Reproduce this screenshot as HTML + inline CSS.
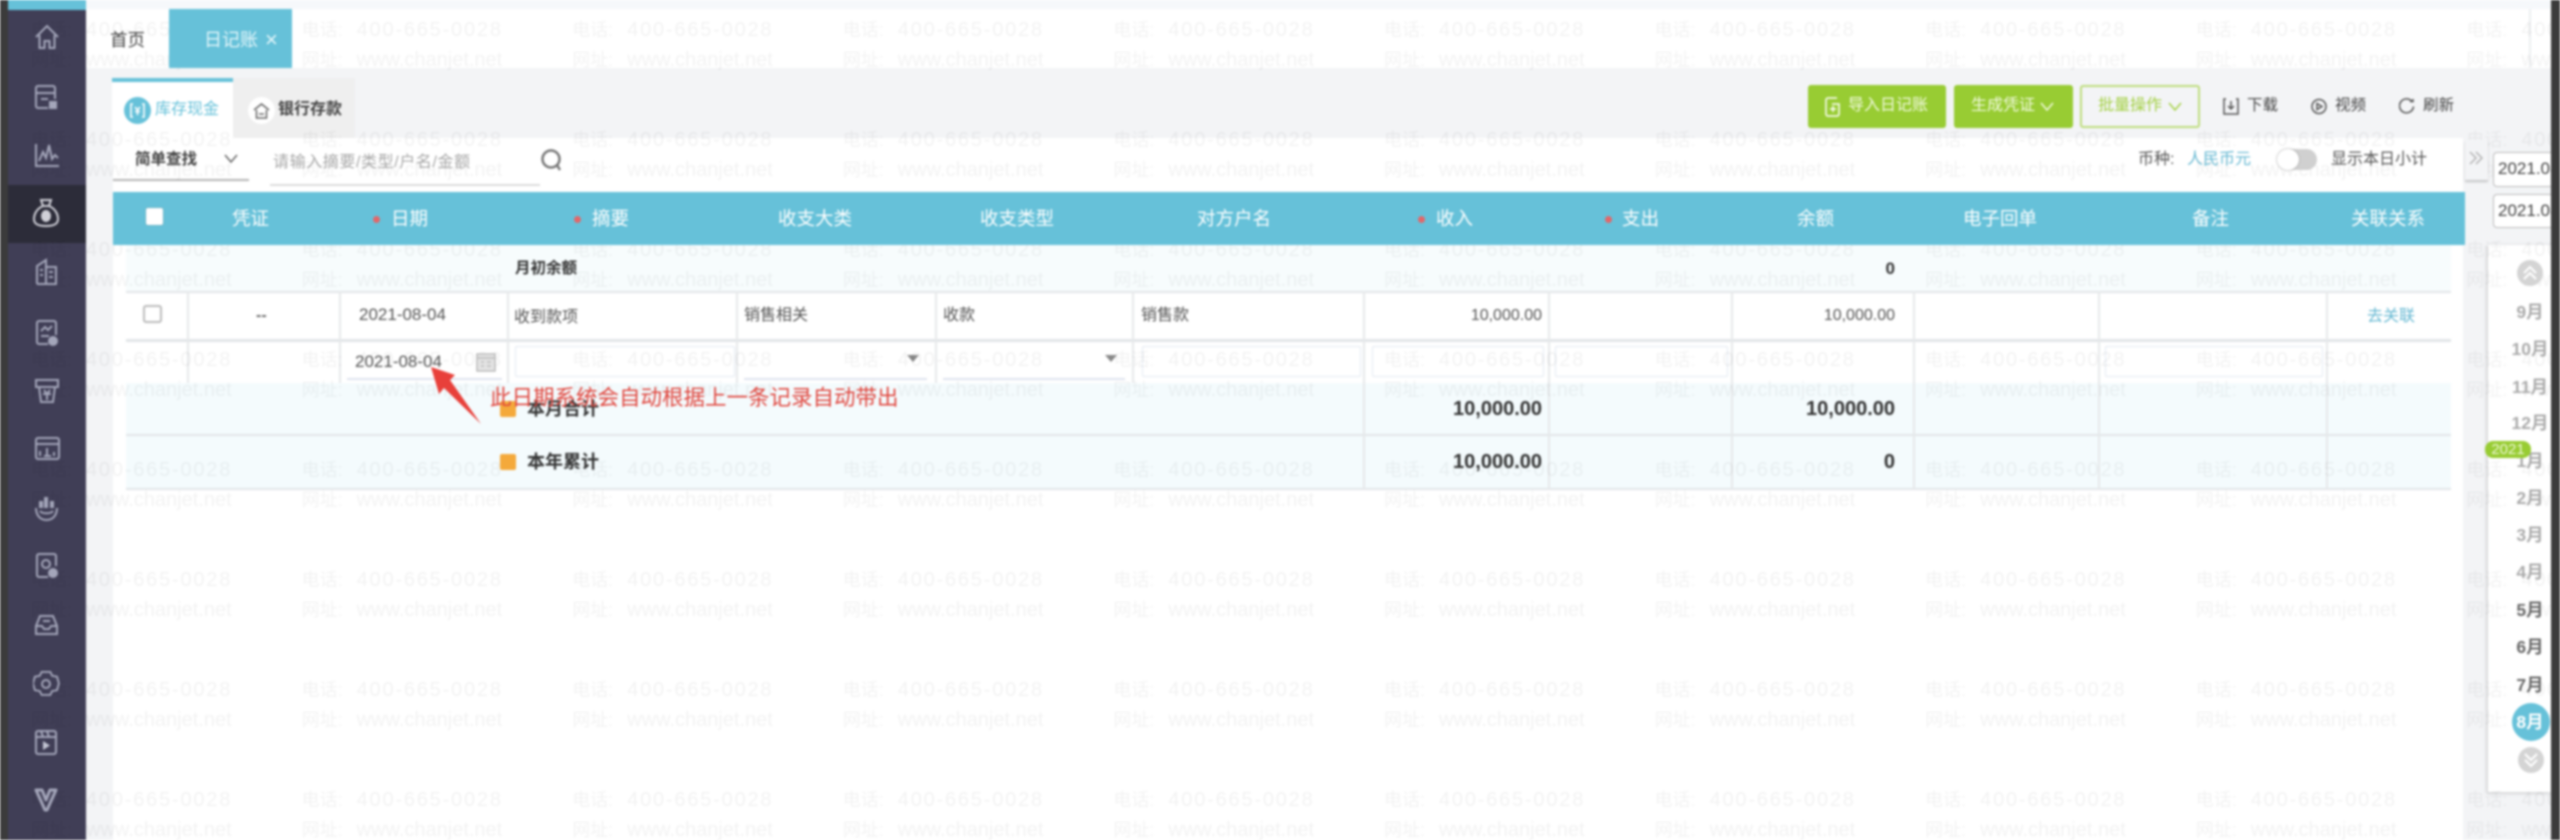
<!DOCTYPE html>
<html lang="zh"><head><meta charset="utf-8"><title>日记账</title>
<style>
*{box-sizing:border-box}
html,body{margin:0;padding:0}
body{width:2560px;height:840px;overflow:hidden;background:#fff;position:relative;font-family:"Liberation Sans","Noto Sans CJK SC",sans-serif;color:#444}
#pg{position:absolute;left:0;top:0;width:2560px;height:840px;overflow:hidden;filter:blur(.95px)}
.a{position:absolute}
.t{position:absolute;line-height:24px;white-space:nowrap;font-size:16px}
.h{color:#fff;font-size:18.5px;z-index:3}
.dot{position:absolute;width:7px;height:7px;border-radius:50%;background:#e2676a;z-index:3;top:216px}
.b{font-weight:700;color:#333}
.vl{position:absolute;width:2px;background:#e6e8ea}
.hl{position:absolute;left:126px;width:2325px;height:2px;background:#e2e5e8}
.in{position:absolute;top:346px;height:31px;border:1.5px solid #e3e9f2;border-radius:2px}
.ul{position:absolute;height:2px;top:378px;background:#dfe3ee}
.tri{position:absolute;top:355px;width:0;height:0;border-left:6px solid transparent;border-right:6px solid transparent;border-top:7px solid #888}
.mo{position:absolute;left:2500px;width:60px;text-align:center;font-size:17.5px;line-height:24px;color:#aaa;font-weight:700;z-index:3}
.w{position:absolute;left:31px;white-space:nowrap;height:26px;line-height:26px;z-index:2;color:rgba(0,0,0,.05);font-size:20px}
.w i{display:inline-block;width:270.6px;font-style:normal;letter-spacing:1.8px}
.w u{display:inline-block;width:55px;text-decoration:none;font-size:18px;letter-spacing:0}
.w.n i{letter-spacing:0}
svg{position:absolute;z-index:3;fill:none}
.ic{stroke:#a4a6ba;stroke-width:2}
</style></head><body><div id="pg">

<!-- backgrounds -->
<div class="a" style="left:0;top:0;width:2560px;height:9px;background:#f6f8fb"></div>
<div class="a" style="left:86px;top:68px;width:27px;height:772px;background:#f3f4f6"></div>
<div class="a" style="left:86px;top:68px;width:2465px;height:70px;background:#f3f4f6"></div>
<div class="a" style="left:2463px;top:138px;width:25px;height:702px;background:#f3f4f6"></div>
<div class="a" style="left:2488px;top:138px;width:63px;height:702px;background:#f3f4f6"></div>
<div class="a" style="left:2488px;top:245px;width:63px;height:547px;background:#fff;box-shadow:-1px 1px 4px rgba(0,0,0,.18);"></div>
<div class="a" style="left:2529px;top:9px;width:2px;height:59px;background:#eceef0"></div>

<!-- sidebar -->
<div class="a" style="left:0;top:0;width:8px;height:840px;background:#3b3b3b"></div>
<div class="a" style="left:8px;top:0;width:78px;height:840px;background:#403e56"></div>
<div class="a" style="left:8px;top:0;width:78px;height:10px;background:#66c1d9"></div>
<div class="a" style="left:8px;top:185px;width:78px;height:58px;background:#2c2c39"></div>
<div class="a" style="left:2551px;top:0;width:9px;height:840px;background:#3b3b3b;z-index:5"></div>

<svg class="ic" style="left:34px;top:24px" width="26" height="26" viewBox="0 0 26 26"><path d="M2 13 13 2l11 11M5.500 11v13h5v-7h5v7h5V11"/></svg>
<svg class="ic" style="left:34px;top:84px" width="24" height="26" viewBox="0 0 24 26"><path d="M14 24H4a2 2 0 0 1-2-2V4a2 2 0 0 1 2-2h15a2 2 0 0 1 2 2v11M2 9h19M7 15h7"/><rect x="16" y="18" width="6" height="6" fill="#a4a6ba"/></svg>
<svg class="ic" style="left:34px;top:142px" width="26" height="26" viewBox="0 0 26 26"><path d="M2 2v22h23M5 19l4-9 3 6 3-13 3 14 3-4 3 3"/></svg>
<svg style="left:33px;top:198px;stroke:#d0d0d8;stroke-width:2" width="26" height="30" viewBox="0 0 26 30"><path d="M8 2h10l-2 6h-6zM10 8C3 11 1 17 1 21c0 5 4 7 12 7s12-2 12-7c0-4-2-10-9-13z"/><ellipse cx="13" cy="18" rx="4" ry="5" fill="#d0d0d8"/></svg>
<svg class="ic" style="left:35px;top:258px" width="24" height="28" viewBox="0 0 24 28"><path d="M2 26V8l9-6v24M11 9h10v17H2M5 12h3M5 17h3M14 14h4M14 19h4"/></svg>
<svg class="ic" style="left:35px;top:320px" width="23" height="26" viewBox="0 0 23 26"><path d="M13 24H4a2 2 0 0 1-2-2V3a2 2 0 0 1 2-2h15a2 2 0 0 1 2 2v12M6 11l4-4 3 3 4-4M6 16h8"/><circle cx="18" cy="21" r="4" fill="#a4a6ba"/></svg>
<svg class="ic" style="left:34px;top:378px" width="26" height="26" viewBox="0 0 26 26"><path d="M2 2h22v7H2zM5 9l2 15h12l2-15M10 12l3 4 3-4M9 16h8M13 16v6"/></svg>
<svg class="ic" style="left:34px;top:436px" width="27" height="25" viewBox="0 0 27 25"><rect x="2" y="2" width="23" height="21" rx="2"/><path d="M2 8h23M6 20v-5M13 20v-8M20 20v-4M10 20h7"/></svg>
<svg class="ic" style="left:34px;top:494px" width="25" height="28" viewBox="0 0 25 28"><path d="M2 14c0 7 4 12 10.500 12S23 21 23 14M6 17c2 3 11 3 13 0"/><path d="M7 14V7M12 14V3M18 14V7" stroke-width="4"/></svg>
<svg class="ic" style="left:35px;top:552px" width="23" height="27" viewBox="0 0 23 27"><path d="M13 25H4a2 2 0 0 1-2-2V4a2 2 0 0 1 2-2h15a2 2 0 0 1 2 2v10"/><circle cx="11" cy="12" r="4"/><circle cx="18" cy="21" r="4" fill="#a4a6ba"/></svg>
<svg class="ic" style="left:34px;top:613px" width="25" height="24" viewBox="0 0 25 24"><path d="M2 13 6 3h13l4 10v8H2zM2 13h6l2 3h5l2-3h6M9 8h7"/></svg>
<svg class="ic" style="left:33px;top:670px" width="27" height="28" viewBox="0 0 27 28"><path d="M9 2h9l2 4 5 1 2 7-2 7-5 1-2 4H9l-2-4-5-1-2-7 2-7 5-1z" transform="scale(.96)"/><circle cx="13" cy="14" r="4"/></svg>
<svg class="ic" style="left:34px;top:729px" width="24" height="27" viewBox="0 0 24 27"><rect x="2" y="2" width="20" height="23" rx="2"/><path d="M2 8h20M7 2l2 6M13 2l2 6"/><path d="M9 12l7 4.500-7 4.500z" fill="#c4c6d4" stroke="none"/></svg>
<svg style="left:34px;top:788px;stroke:#a4a6ba;stroke-width:3" width="24" height="24" viewBox="0 0 24 24"><path d="M2 2h6l4 10 4-10h6L13 22h-2z" stroke-linejoin="round"/></svg>

<!-- tabs -->
<div class="t" style="left:110px;top:28px;font-size:17.500px;color:#444">首页</div>
<div class="a" style="left:169px;top:9px;width:123px;height:59px;background:#66c1d9;z-index:3"></div>
<div class="t" style="left:204px;top:28px;font-size:18px;color:#e4f6fa;z-index:3">日记账</div>
<div class="t" style="left:265px;top:28px;font-size:22px;color:#e4f6fa;z-index:3">×</div>

<div class="a" style="left:112px;top:78px;width:121px;height:60px;background:#fff;border-top:4px solid #66c1d9"></div>
<div class="a" style="left:233px;top:78px;width:122px;height:60px;background:#efefef"></div>
<div class="a" style="left:124px;top:97px;width:27px;height:27px;border-radius:50%;background:#66c1d9"></div>
<svg style="left:130px;top:103px;stroke:#fff;stroke-width:1.600" width="15" height="15" viewBox="0 0 15 15"><path d="M3 1H1v13h2M12 1h2v13h-2M5 4l2.500 3L10 4M7.500 7v5M5 8.500h5"/></svg>
<div class="t" style="left:155px;top:98px;color:#66c1d9">库存现金</div>
<div class="a" style="left:248px;top:97px;width:27px;height:27px;border-radius:50%;background:#fff"></div>
<svg style="left:253px;top:103px;stroke:#666;stroke-width:1.500" width="17" height="16" viewBox="0 0 17 16"><path d="M1 7l7.500-6L16 7M3.500 7v8h10V7M6 11h5"/></svg>
<div class="t" style="left:278px;top:98px;color:#444;font-weight:700">银行存款</div>

<!-- search row -->
<div class="t" style="left:135px;top:148px;color:#444;font-weight:700;font-size:15.500px">简单查找</div>
<svg style="left:224px;top:154px;stroke:#666;stroke-width:1.500" width="14" height="9" viewBox="0 0 14 9"><path d="M1 1l6 7 6-7"/></svg>
<div class="a" style="left:113px;top:179px;width:136px;height:2px;background:#b4b4b4"></div>
<div class="t" style="left:273px;top:151px;color:#a8a8a8;letter-spacing:.6px">请输入摘要/类型/户名/金额</div>
<div class="a" style="left:270px;top:184px;width:270px;height:1.500px;background:#dcdcdc"></div>
<svg style="left:540px;top:149px;stroke:#777;stroke-width:2.500" width="24" height="24" viewBox="0 0 24 24"><circle cx="11" cy="10" r="8.500"/><path d="M17 16l3 5"/></svg>

<!-- toolbar right -->
<div class="a" style="left:1808px;top:85px;width:138px;height:43px;background:#98cc33;border-radius:3px;z-index:3"></div>
<svg style="left:1825px;top:97px;stroke:#fff;stroke-width:1.500" width="16" height="20" viewBox="0 0 16 20"><path d="M12 1H3a2 2 0 0 0-2 2v14a2 2 0 0 0 2 2h9a2 2 0 0 0 2-2V7H7M8 9v6M5 12h6"/></svg>
<div class="t" style="left:1848px;top:94px;color:#f2fae0;z-index:3">导入日记账</div>
<div class="a" style="left:1954px;top:85px;width:119px;height:43px;background:#98cc33;border-radius:3px;z-index:3"></div>
<div class="t" style="left:1971px;top:94px;color:#f2fae0;z-index:3">生成凭证</div>
<svg style="left:2040px;top:102px;stroke:#f2fae0;stroke-width:1.500" width="14" height="9" viewBox="0 0 14 9"><path d="M1 1l6 7 6-7"/></svg>
<div class="a" style="left:2080px;top:85px;width:120px;height:43px;border:2px solid #bedd7d;border-radius:3px;z-index:3"></div>
<div class="t" style="left:2098px;top:94px;color:#a5d147;z-index:3">批量操作</div>
<svg style="left:2168px;top:102px;stroke:#a5d147;stroke-width:1.500" width="14" height="9" viewBox="0 0 14 9"><path d="M1 1l6 7 6-7"/></svg>

<svg style="left:2223px;top:98px;stroke:#555;stroke-width:1.500" width="16" height="17" viewBox="0 0 16 17"><path d="M3 1H1v15h14V1h-2M8 3v8M5 8l3 3 3-3"/></svg>
<div class="t" style="left:2247px;top:94px;font-size:15.500px;color:#444">下载</div>
<svg style="left:2311px;top:98px;stroke:#555;stroke-width:1.500" width="16" height="17" viewBox="0 0 16 17"><circle cx="8" cy="8.500" r="7"/><path d="M6 5.500l5 3-5 3z"/></svg>
<div class="t" style="left:2335px;top:94px;font-size:15.500px;color:#444">视频</div>
<svg style="left:2399px;top:98px;stroke:#555;stroke-width:1.500" width="16" height="17" viewBox="0 0 16 17"><path d="M13 3.500a7 7 0 1 0 1.500 5"/><path d="M11 3.500h3V1"/></svg>
<div class="t" style="left:2423px;top:94px;font-size:15.500px;color:#444">刷新</div>

<div class="t" style="left:2138px;top:148px;color:#555">币种:</div>
<div class="t" style="left:2187px;top:148px;color:#66b8d2">人民币元</div>
<div class="a" style="left:2277px;top:149px;width:40px;height:21px;border-radius:11px;background:#d0d0d0;z-index:3"></div>
<div class="a" style="left:2277px;top:149px;width:22px;height:21px;border-radius:50%;background:#fff;box-shadow:0 0 2px #999;z-index:3"></div>
<div class="t" style="left:2331px;top:148px;color:#555">显示本日小计</div>

<!-- table header -->
<div class="a" style="left:113px;top:192px;width:2352px;height:53px;background:#66c1d9;z-index:3"></div>
<div class="a" style="left:146px;top:208px;width:17px;height:17px;background:#fff;border-radius:2px;box-shadow:0 0 1px #666;z-index:3"></div>
<div class="t h" style="left:232px;top:207px">凭证</div>
<div class="dot" style="left:373px"></div><div class="t h" style="left:391px;top:207px">日期</div>
<div class="dot" style="left:574px"></div><div class="t h" style="left:592px;top:207px">摘要</div>
<div class="t h" style="left:778px;top:207px">收支大类</div>
<div class="t h" style="left:980px;top:207px">收支类型</div>
<div class="t h" style="left:1197px;top:207px">对方户名</div>
<div class="dot" style="left:1418px"></div><div class="t h" style="left:1436px;top:207px">收入</div>
<div class="dot" style="left:1605px"></div><div class="t h" style="left:1622px;top:207px">支出</div>
<div class="t h" style="left:1797px;top:207px">余额</div>
<div class="t h" style="left:1963px;top:207px">电子回单</div>
<div class="t h" style="left:2192px;top:207px">备注</div>
<div class="t h" style="left:2351px;top:207px">关联关系</div>

<!-- rows -->
<div class="a" style="left:126px;top:245px;width:2325px;height:46px;background:#f7fcfd"></div>
<div class="a" style="left:126px;top:383px;width:2325px;height:106px;background:#f4fbfd"></div>
<div class="hl" style="top:291px"></div>
<div class="hl" style="top:339px;height:3px"></div>
<div class="hl" style="top:434px"></div>
<div class="hl" style="top:488px"></div>
<div class="vl" style="left:187px;top:291px;height:92px"></div>
<div class="vl" style="left:339px;top:291px;height:92px"></div>
<div class="vl" style="left:507px;top:291px;height:92px"></div>
<div class="vl" style="left:736px;top:291px;height:92px"></div>
<div class="vl" style="left:935px;top:291px;height:92px"></div>
<div class="vl" style="left:1132px;top:291px;height:92px"></div>
<div class="vl" style="left:1363px;top:291px;height:198px"></div>
<div class="vl" style="left:1548px;top:291px;height:198px"></div>
<div class="vl" style="left:1731px;top:291px;height:198px"></div>
<div class="vl" style="left:1913px;top:291px;height:198px"></div>
<div class="vl" style="left:2098px;top:291px;height:198px"></div>
<div class="vl" style="left:2326px;top:291px;height:198px"></div>

<div class="t b" style="left:515px;top:257px;font-size:15.500px">月初余额</div>
<div class="t b" style="right:665px;top:257px;font-size:17px">0</div>

<div class="a" style="left:143px;top:305px;width:19px;height:18px;border:2px solid #bbb;border-radius:3px;background:#fff"></div>
<div class="t" style="left:256px;top:304px;font-weight:700;color:#666">--</div>
<div class="t" style="left:359px;top:303px;font-size:17px;color:#555">2021-08-04</div>
<div class="t" style="left:514px;top:306px;color:#555">收到款项</div>
<div class="t" style="left:744px;top:304px;color:#555">销售相关</div>
<div class="t" style="left:943px;top:304px;color:#555">收款</div>
<div class="t" style="left:1141px;top:304px;color:#555">销售款</div>
<div class="t" style="right:1018px;top:304px;color:#555">10,000.00</div>
<div class="t" style="right:665px;top:304px;color:#555">10,000.00</div>
<div class="t" style="left:2367px;top:305px;color:#66b8d2">去关联</div>

<div class="t" style="left:355px;top:350px;font-size:17px;color:#555">2021-08-04</div>
<div class="ul" style="left:347px;width:155px"></div>
<svg style="left:476px;top:352px;stroke:#bbb;stroke-width:1.500" width="20" height="20" viewBox="0 0 20 20"><rect x="1" y="2" width="18" height="17" fill="#e4e4e4"/><path d="M1 6h18M5 10h3M11 10h4M5 14h3M11 14h4"/></svg>
<div class="in" style="left:515px;width:220px"></div>
<div class="ul" style="left:744px;width:183px"></div><div class="tri" style="left:907px"></div>
<div class="ul" style="left:943px;width:182px"></div><div class="tri" style="left:1105px"></div>
<div class="in" style="left:1142px;width:219px"></div>
<div class="in" style="left:1372px;width:172px"></div>
<div class="in" style="left:1555px;width:173px"></div>
<div class="in" style="left:2105px;width:218px"></div>

<div class="a" style="left:500px;top:401px;width:16px;height:16px;background:#f4a93b;border-radius:2px"></div>
<div class="t b" style="left:527px;top:397px;font-size:18px">本月合计</div>
<div class="a" style="left:500px;top:454px;width:16px;height:16px;background:#f4a93b;border-radius:2px"></div>
<div class="t b" style="left:527px;top:450px;font-size:18px">本年累计</div>
<div class="t b" style="right:1018px;top:397px;font-size:20px">10,000.00</div>
<div class="t b" style="right:665px;top:397px;font-size:20px">10,000.00</div>
<div class="t b" style="right:1018px;top:450px;font-size:20px">10,000.00</div>
<div class="t b" style="right:665px;top:450px;font-size:20px">0</div>

<!-- annotation -->
<div class="t" style="left:490px;top:386px;font-size:21.500px;color:#e0463e;z-index:4">此日期系统会自动根据上一条记录自动带出</div>
<svg style="left:425px;top:362px;z-index:4" width="65" height="70" viewBox="0 0 65 70"><path d="M6 5 30 13 25 18 56 62 19 26 14 32z" fill="#e8403a"/></svg>

<!-- right panel -->
<div class="a" style="left:2465px;top:140px;width:23px;height:40px;background:#f3f4f6;box-shadow:0 2px 2px rgba(0,0,0,.2);z-index:3"></div>
<svg style="left:2468px;top:150px;stroke:#b4b4b4;stroke-width:1.500" width="16" height="16" viewBox="0 0 16 16"><path d="M2 2l6 6-6 6M8 2l6 6-6 6"/></svg>
<div class="a" style="left:2493px;top:152px;width:58px;height:35px;background:#fff;border:1.500px solid #bbb;border-right:0;border-radius:4px 0 0 4px;z-index:3;overflow:hidden;font-size:17px;line-height:32px;padding-left:4px;color:#444;white-space:nowrap">2021.08</div>
<div class="a" style="left:2493px;top:194px;width:58px;height:34px;background:#fff;border:1.500px solid #bbb;border-right:0;border-radius:4px 0 0 4px;z-index:3;overflow:hidden;font-size:17px;line-height:31px;padding-left:4px;color:#444;white-space:nowrap">2021.08</div>

<div class="a" style="left:2517px;top:260px;width:26px;height:26px;border-radius:50%;background:#d4d4d4;z-index:3"></div>
<svg style="left:2522px;top:265px;stroke:#fff;stroke-width:2" width="16" height="16" viewBox="0 0 16 16"><path d="M2 8l6-6 6 6M2 14l6-6 6 6"/></svg>
<div class="mo" style="top:300px">9月</div>
<div class="mo" style="top:337px">10月</div>
<div class="mo" style="top:375px">11月</div>
<div class="mo" style="top:411px">12月</div>
<div class="mo" style="top:449px">1月</div>
<div class="a" style="left:2485px;top:441px;width:46px;height:17px;border-radius:8px;background:#98cc33;z-index:4;color:#eef8d8;font-size:15px;line-height:17px;text-align:center">2021</div>
<div class="mo" style="top:486px">2月</div>
<div class="mo" style="top:523px">3月</div>
<div class="mo" style="top:560px">4月</div>
<div class="mo" style="top:598px;color:#666">5月</div>
<div class="mo" style="top:635px;color:#666">6月</div>
<div class="mo" style="top:673px;color:#666">7月</div>
<div class="a" style="left:2512px;top:703px;width:38px;height:38px;border-radius:50%;background:#66c1d9;z-index:3"></div>
<div class="mo" style="top:710px;color:#fff;z-index:4">8月</div>
<div class="a" style="left:2518px;top:747px;width:26px;height:26px;border-radius:50%;background:#d4d4d4;z-index:3"></div>
<svg style="left:2523px;top:752px;stroke:#fff;stroke-width:2" width="16" height="16" viewBox="0 0 16 16"><path d="M2 2l6 6 6-6M2 8l6 6 6-6"/></svg>

<!-- watermark -->
<div class="w" style="top:17px"><i><u>电话:</u>400-665-0028</i><i><u>电话:</u>400-665-0028</i><i><u>电话:</u>400-665-0028</i><i><u>电话:</u>400-665-0028</i><i><u>电话:</u>400-665-0028</i><i><u>电话:</u>400-665-0028</i><i><u>电话:</u>400-665-0028</i><i><u>电话:</u>400-665-0028</i><i><u>电话:</u>400-665-0028</i><i><u>电话:</u>400-665-0028</i></div>
<div class="w n" style="top:47px"><i><u>网址:</u>www.chanjet.net</i><i><u>网址:</u>www.chanjet.net</i><i><u>网址:</u>www.chanjet.net</i><i><u>网址:</u>www.chanjet.net</i><i><u>网址:</u>www.chanjet.net</i><i><u>网址:</u>www.chanjet.net</i><i><u>网址:</u>www.chanjet.net</i><i><u>网址:</u>www.chanjet.net</i><i><u>网址:</u>www.chanjet.net</i><i><u>网址:</u>www.chanjet.net</i></div>
<div class="w" style="top:127px"><i><u>电话:</u>400-665-0028</i><i><u>电话:</u>400-665-0028</i><i><u>电话:</u>400-665-0028</i><i><u>电话:</u>400-665-0028</i><i><u>电话:</u>400-665-0028</i><i><u>电话:</u>400-665-0028</i><i><u>电话:</u>400-665-0028</i><i><u>电话:</u>400-665-0028</i><i><u>电话:</u>400-665-0028</i><i><u>电话:</u>400-665-0028</i></div>
<div class="w n" style="top:157px"><i><u>网址:</u>www.chanjet.net</i><i><u>网址:</u>www.chanjet.net</i><i><u>网址:</u>www.chanjet.net</i><i><u>网址:</u>www.chanjet.net</i><i><u>网址:</u>www.chanjet.net</i><i><u>网址:</u>www.chanjet.net</i><i><u>网址:</u>www.chanjet.net</i><i><u>网址:</u>www.chanjet.net</i><i><u>网址:</u>www.chanjet.net</i><i><u>网址:</u>www.chanjet.net</i></div>
<div class="w" style="top:237px"><i><u>电话:</u>400-665-0028</i><i><u>电话:</u>400-665-0028</i><i><u>电话:</u>400-665-0028</i><i><u>电话:</u>400-665-0028</i><i><u>电话:</u>400-665-0028</i><i><u>电话:</u>400-665-0028</i><i><u>电话:</u>400-665-0028</i><i><u>电话:</u>400-665-0028</i><i><u>电话:</u>400-665-0028</i><i><u>电话:</u>400-665-0028</i></div>
<div class="w n" style="top:267px"><i><u>网址:</u>www.chanjet.net</i><i><u>网址:</u>www.chanjet.net</i><i><u>网址:</u>www.chanjet.net</i><i><u>网址:</u>www.chanjet.net</i><i><u>网址:</u>www.chanjet.net</i><i><u>网址:</u>www.chanjet.net</i><i><u>网址:</u>www.chanjet.net</i><i><u>网址:</u>www.chanjet.net</i><i><u>网址:</u>www.chanjet.net</i><i><u>网址:</u>www.chanjet.net</i></div>
<div class="w" style="top:347px"><i><u>电话:</u>400-665-0028</i><i><u>电话:</u>400-665-0028</i><i><u>电话:</u>400-665-0028</i><i><u>电话:</u>400-665-0028</i><i><u>电话:</u>400-665-0028</i><i><u>电话:</u>400-665-0028</i><i><u>电话:</u>400-665-0028</i><i><u>电话:</u>400-665-0028</i><i><u>电话:</u>400-665-0028</i><i><u>电话:</u>400-665-0028</i></div>
<div class="w n" style="top:377px"><i><u>网址:</u>www.chanjet.net</i><i><u>网址:</u>www.chanjet.net</i><i><u>网址:</u>www.chanjet.net</i><i><u>网址:</u>www.chanjet.net</i><i><u>网址:</u>www.chanjet.net</i><i><u>网址:</u>www.chanjet.net</i><i><u>网址:</u>www.chanjet.net</i><i><u>网址:</u>www.chanjet.net</i><i><u>网址:</u>www.chanjet.net</i><i><u>网址:</u>www.chanjet.net</i></div>
<div class="w" style="top:457px"><i><u>电话:</u>400-665-0028</i><i><u>电话:</u>400-665-0028</i><i><u>电话:</u>400-665-0028</i><i><u>电话:</u>400-665-0028</i><i><u>电话:</u>400-665-0028</i><i><u>电话:</u>400-665-0028</i><i><u>电话:</u>400-665-0028</i><i><u>电话:</u>400-665-0028</i><i><u>电话:</u>400-665-0028</i><i><u>电话:</u>400-665-0028</i></div>
<div class="w n" style="top:487px"><i><u>网址:</u>www.chanjet.net</i><i><u>网址:</u>www.chanjet.net</i><i><u>网址:</u>www.chanjet.net</i><i><u>网址:</u>www.chanjet.net</i><i><u>网址:</u>www.chanjet.net</i><i><u>网址:</u>www.chanjet.net</i><i><u>网址:</u>www.chanjet.net</i><i><u>网址:</u>www.chanjet.net</i><i><u>网址:</u>www.chanjet.net</i><i><u>网址:</u>www.chanjet.net</i></div>
<div class="w" style="top:567px"><i><u>电话:</u>400-665-0028</i><i><u>电话:</u>400-665-0028</i><i><u>电话:</u>400-665-0028</i><i><u>电话:</u>400-665-0028</i><i><u>电话:</u>400-665-0028</i><i><u>电话:</u>400-665-0028</i><i><u>电话:</u>400-665-0028</i><i><u>电话:</u>400-665-0028</i><i><u>电话:</u>400-665-0028</i><i><u>电话:</u>400-665-0028</i></div>
<div class="w n" style="top:597px"><i><u>网址:</u>www.chanjet.net</i><i><u>网址:</u>www.chanjet.net</i><i><u>网址:</u>www.chanjet.net</i><i><u>网址:</u>www.chanjet.net</i><i><u>网址:</u>www.chanjet.net</i><i><u>网址:</u>www.chanjet.net</i><i><u>网址:</u>www.chanjet.net</i><i><u>网址:</u>www.chanjet.net</i><i><u>网址:</u>www.chanjet.net</i><i><u>网址:</u>www.chanjet.net</i></div>
<div class="w" style="top:677px"><i><u>电话:</u>400-665-0028</i><i><u>电话:</u>400-665-0028</i><i><u>电话:</u>400-665-0028</i><i><u>电话:</u>400-665-0028</i><i><u>电话:</u>400-665-0028</i><i><u>电话:</u>400-665-0028</i><i><u>电话:</u>400-665-0028</i><i><u>电话:</u>400-665-0028</i><i><u>电话:</u>400-665-0028</i><i><u>电话:</u>400-665-0028</i></div>
<div class="w n" style="top:707px"><i><u>网址:</u>www.chanjet.net</i><i><u>网址:</u>www.chanjet.net</i><i><u>网址:</u>www.chanjet.net</i><i><u>网址:</u>www.chanjet.net</i><i><u>网址:</u>www.chanjet.net</i><i><u>网址:</u>www.chanjet.net</i><i><u>网址:</u>www.chanjet.net</i><i><u>网址:</u>www.chanjet.net</i><i><u>网址:</u>www.chanjet.net</i><i><u>网址:</u>www.chanjet.net</i></div>
<div class="w" style="top:787px"><i><u>电话:</u>400-665-0028</i><i><u>电话:</u>400-665-0028</i><i><u>电话:</u>400-665-0028</i><i><u>电话:</u>400-665-0028</i><i><u>电话:</u>400-665-0028</i><i><u>电话:</u>400-665-0028</i><i><u>电话:</u>400-665-0028</i><i><u>电话:</u>400-665-0028</i><i><u>电话:</u>400-665-0028</i><i><u>电话:</u>400-665-0028</i></div>
<div class="w n" style="top:817px"><i><u>网址:</u>www.chanjet.net</i><i><u>网址:</u>www.chanjet.net</i><i><u>网址:</u>www.chanjet.net</i><i><u>网址:</u>www.chanjet.net</i><i><u>网址:</u>www.chanjet.net</i><i><u>网址:</u>www.chanjet.net</i><i><u>网址:</u>www.chanjet.net</i><i><u>网址:</u>www.chanjet.net</i><i><u>网址:</u>www.chanjet.net</i><i><u>网址:</u>www.chanjet.net</i></div>

</div></body></html>
